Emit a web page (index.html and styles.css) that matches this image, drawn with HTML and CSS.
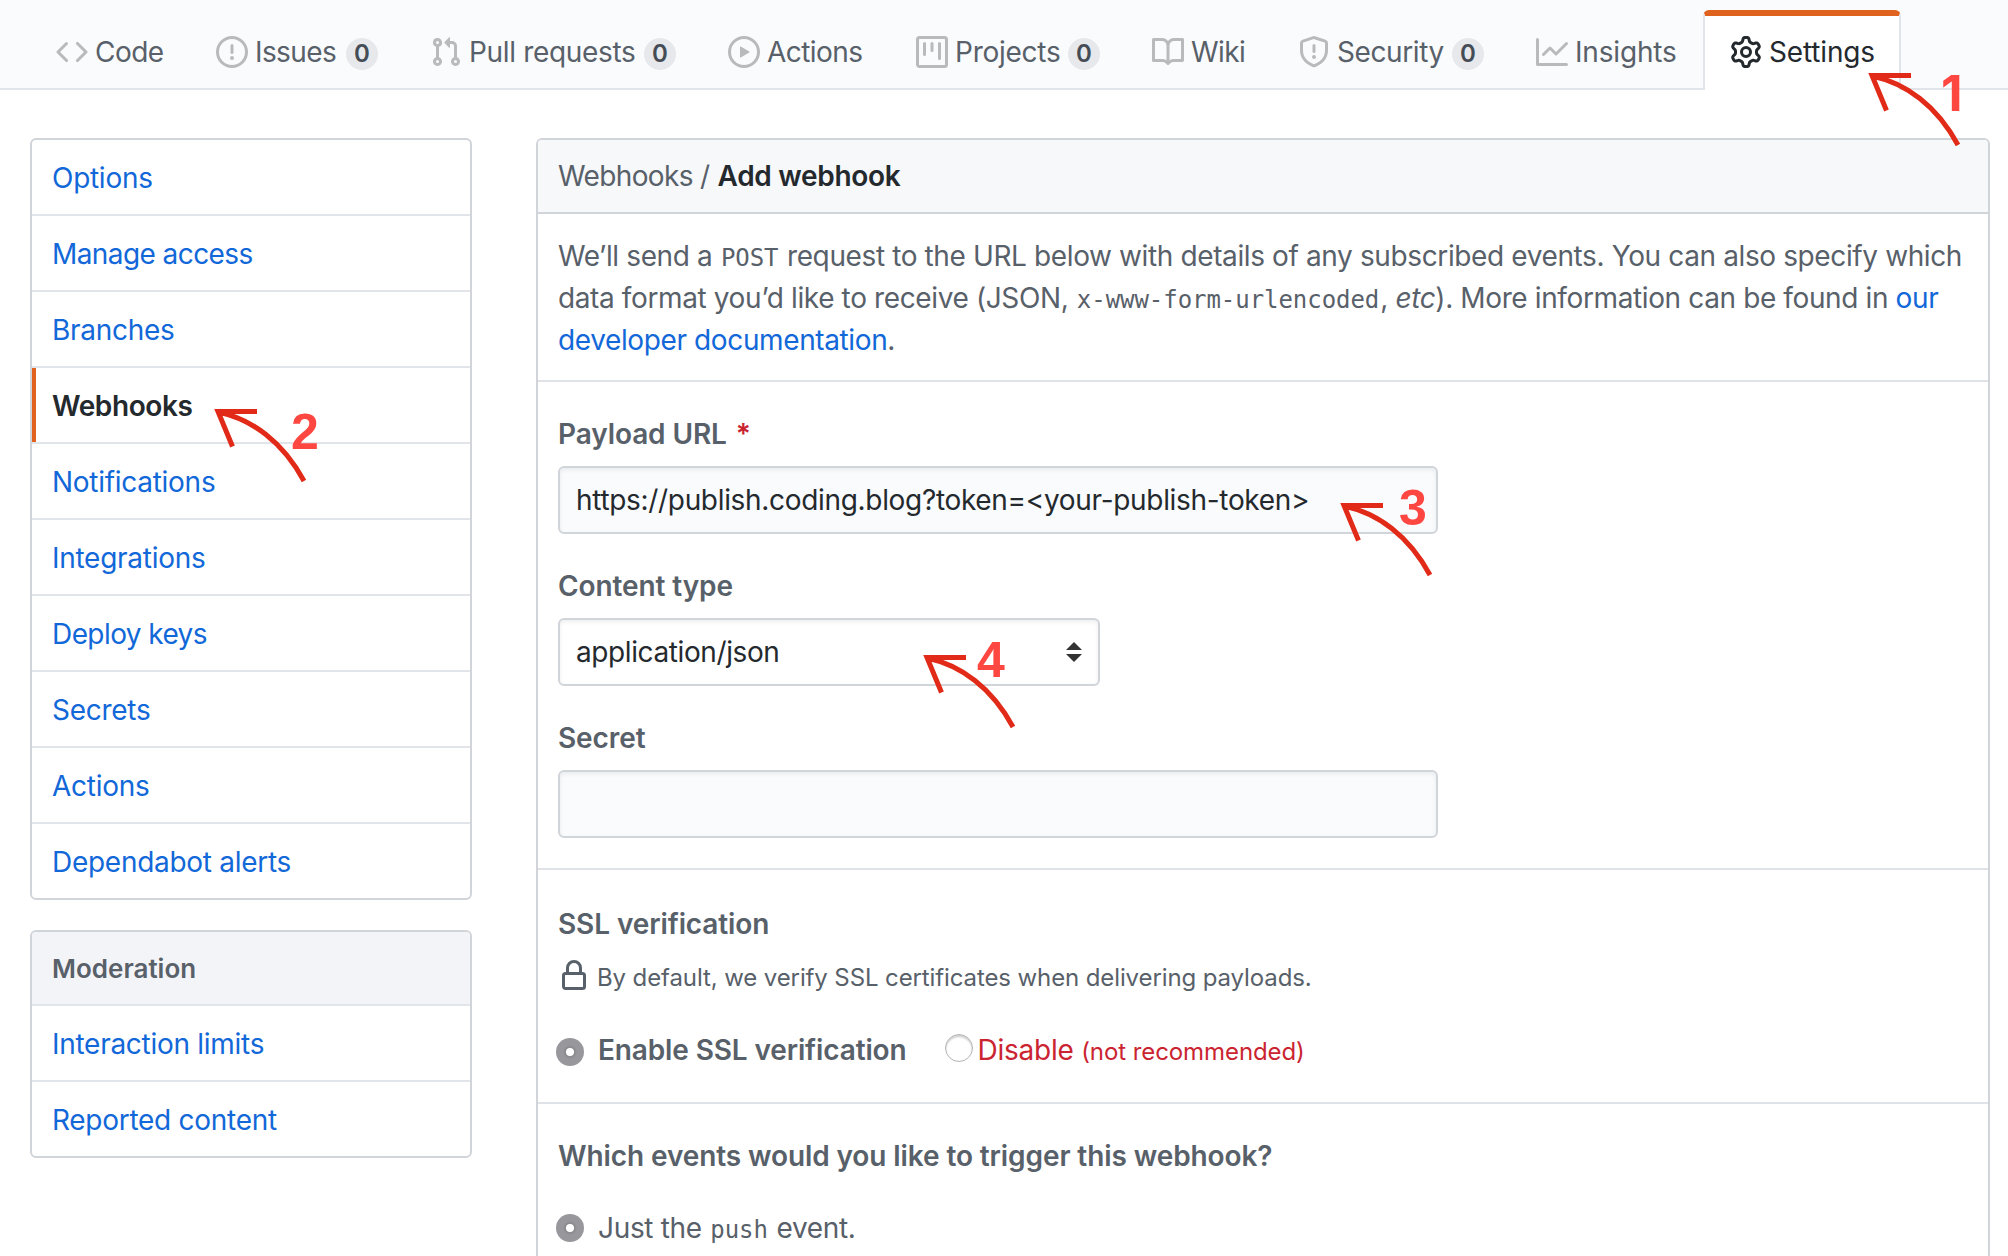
FILE: index.html
```html
<!DOCTYPE html>
<html lang="en">
<head>
<meta charset="utf-8">
<title>Add webhook</title>
<link rel="stylesheet" href="styles.css">
</head>
<body>
<nav class="tabs">
  <a class="tab tab-code"><svg class="icon" viewBox="0 0 16 16"><path d="M4.72 3.22a.75.75 0 011.06 1.06L2.06 8l3.72 3.72a.75.75 0 11-1.06 1.06L.47 8.53a.75.75 0 010-1.06l4.25-4.25zm6.56 0a.75.75 0 10-1.06 1.06L13.94 8l-3.72 3.72a.75.75 0 101.06 1.06l4.25-4.25a.75.75 0 000-1.06l-4.25-4.25z"/></svg><span>Code</span></a>
  <a class="tab tab-issues"><svg class="icon" viewBox="0 0 16 16"><path fill-rule="evenodd" d="M8 1.5a6.5 6.5 0 100 13 6.5 6.5 0 000-13zM0 8a8 8 0 1116 0A8 8 0 010 8zm9 3a1 1 0 11-2 0 1 1 0 012 0zm-.25-6.25a.75.75 0 00-1.5 0v3.5a.75.75 0 001.5 0v-3.5z"/></svg><span>Issues</span><span class="counter">0</span></a>
  <a class="tab tab-pulls"><svg class="icon" viewBox="0 0 16 16"><path fill-rule="evenodd" d="M7.177 3.073L9.573.677A.25.25 0 0110 .854v4.792a.25.25 0 01-.427.177L7.177 3.427a.25.25 0 010-.354zM3.75 2.5a.75.75 0 100 1.5.75.75 0 000-1.5zm-2.25.75a2.25 2.25 0 113 2.122v5.256a2.251 2.251 0 11-1.5 0V5.372A2.25 2.25 0 011.5 3.25zM11 2.5h-1V4h1a1 1 0 011 1v5.628a2.251 2.251 0 101.5 0V5A2.5 2.5 0 0011 2.5zm1 10.25a.75.75 0 111.5 0 .75.75 0 01-1.5 0zM3.75 12a.75.75 0 100 1.5.75.75 0 000-1.5z"/></svg><span>Pull requests</span><span class="counter">0</span></a>
  <a class="tab tab-actions"><svg class="icon" viewBox="0 0 16 16"><path fill-rule="evenodd" d="M1.5 8a6.5 6.5 0 1113 0 6.5 6.5 0 01-13 0zM8 0a8 8 0 100 16A8 8 0 008 0zM6.379 5.227A.25.25 0 006 5.442v5.117a.25.25 0 00.379.214l4.264-2.559a.25.25 0 000-.428L6.379 5.227z"/></svg><span>Actions</span></a>
  <a class="tab tab-projects"><svg class="icon" viewBox="0 0 16 16"><path fill-rule="evenodd" d="M1.75 0A1.75 1.75 0 000 1.75v12.5C0 15.216.784 16 1.75 16h12.5A1.75 1.75 0 0016 14.25V1.75A1.75 1.75 0 0014.25 0H1.75zM1.5 1.75a.25.25 0 01.25-.25h12.5a.25.25 0 01.25.25v12.5a.25.25 0 01-.25.25H1.75a.25.25 0 01-.25-.25V1.75zM11.75 3a.75.75 0 00-.75.75v7.5a.75.75 0 001.5 0v-7.5a.75.75 0 00-.75-.75zm-8.25.75a.75.75 0 011.5 0v5.5a.75.75 0 01-1.5 0v-5.5zM8 3a.75.75 0 00-.75.75v3.5a.75.75 0 001.5 0v-3.5A.75.75 0 008 3z"/></svg><span>Projects</span><span class="counter">0</span></a>
  <a class="tab tab-wiki"><svg class="icon" viewBox="0 0 16 16"><path fill-rule="evenodd" d="M0 1.75A.75.75 0 01.75 1h4.253c1.227 0 2.317.59 3 1.501A3.744 3.744 0 0111.006 1h4.245a.75.75 0 01.75.75v10.5a.75.75 0 01-.75.75h-4.507a2.25 2.25 0 00-1.591.659l-.622.621a.75.75 0 01-1.06 0l-.622-.621A2.25 2.25 0 005.258 13H.75a.75.75 0 01-.75-.75V1.75zm8.755 3a2.25 2.25 0 012.25-2.25H14.5v9h-3.757c-.71 0-1.4.201-1.992.572l.004-7.322zm-1.504 7.324l.004-5.073-.002-2.253A2.25 2.25 0 005.003 2.5H1.5v9h3.757a3.75 3.75 0 011.994.574z"/></svg><span>Wiki</span></a>
  <a class="tab tab-security"><svg class="icon" viewBox="0 0 16 16"><path fill-rule="evenodd" d="M7.467.133a1.75 1.75 0 011.066 0l5.25 1.68A1.75 1.75 0 0115 3.48V7c0 1.566-.32 3.182-1.303 4.682-.983 1.498-2.585 2.813-5.032 3.855a1.7 1.7 0 01-1.33 0c-2.447-1.042-4.049-2.357-5.032-3.855C1.32 10.182 1 8.566 1 7V3.48a1.75 1.75 0 011.217-1.667l5.25-1.68zm.61 1.429a.25.25 0 00-.153 0l-5.25 1.68a.25.25 0 00-.174.238V7c0 1.358.275 2.666 1.057 3.86.784 1.194 2.121 2.34 4.366 3.297a.2.2 0 00.154 0c2.245-.956 3.582-2.104 4.366-3.298C13.225 9.666 13.5 8.36 13.5 7V3.48a.25.25 0 00-.174-.237l-5.25-1.68zM9 10.5a1 1 0 11-2 0 1 1 0 012 0zm-.25-5.75a.75.75 0 10-1.5 0v3a.75.75 0 001.5 0v-3z"/></svg><span>Security</span><span class="counter">0</span></a>
  <a class="tab tab-insights"><svg class="icon" viewBox="0 0 16 16"><path d="M1.5 1.75a.75.75 0 00-1.5 0v12.5c0 .414.336.75.75.75h14.5a.75.75 0 000-1.5H1.5V1.75zm14.28 2.53a.75.75 0 00-1.06-1.06L10 7.94 7.53 5.47a.75.75 0 00-1.06 0L3.22 8.72a.75.75 0 001.06 1.06L7 7.06l2.47 2.47a.75.75 0 001.06 0l5.25-5.25z"/></svg><span>Insights</span></a>
  <a class="tab tab-settings selected"><svg class="icon" viewBox="0 0 16 16"><path fill-rule="evenodd" d="M7.429 1.525a6.593 6.593 0 011.142 0c.036.003.108.036.137.146l.289 1.105c.147.56.55.967.997 1.189.174.086.341.183.501.29.417.278.97.423 1.53.27l1.102-.303c.11-.03.175.016.195.046.219.31.41.641.573.989.014.031.022.11-.059.19l-.815.806c-.411.406-.562.957-.53 1.456a4.588 4.588 0 010 .582c-.032.499.119 1.05.53 1.456l.815.806c.08.08.073.159.059.19a6.494 6.494 0 01-.573.99c-.02.029-.086.074-.195.045l-1.103-.303c-.559-.153-1.112-.008-1.529.27-.16.107-.327.204-.5.29-.449.222-.851.628-.998 1.189l-.289 1.105c-.029.11-.101.143-.137.146a6.613 6.613 0 01-1.142 0c-.036-.003-.108-.037-.137-.146l-.289-1.105c-.147-.56-.55-.967-.997-1.189a4.502 4.502 0 01-.501-.29c-.417-.278-.97-.423-1.53-.27l-1.102.303c-.11.03-.175-.016-.195-.046a6.492 6.492 0 01-.573-.989c-.014-.031-.022-.11.059-.19l.815-.806c.411-.406.562-.957.53-1.456a4.587 4.587 0 010-.582c.032-.499-.119-1.05-.53-1.456l-.815-.806c-.08-.08-.073-.159-.059-.19a6.44 6.44 0 01.573-.99c.02-.029.086-.075.195-.045l1.103.303c.559.153 1.112.008 1.529-.27.16-.107.327-.204.5-.29.449-.222.851-.628.998-1.189l.289-1.105c.029-.11.101-.143.137-.146zM8 0c-.236 0-.47.01-.701.03-.743.065-1.29.615-1.458 1.261l-.29 1.106c-.017.066-.078.158-.211.224a5.994 5.994 0 00-.668.386c-.123.082-.233.09-.3.071L3.27 2.776c-.644-.177-1.392.02-1.82.63a7.977 7.977 0 00-.704 1.217c-.315.675-.111 1.422.363 1.891l.815.806c.05.048.098.147.088.294a6.084 6.084 0 000 .772c.01.147-.038.246-.088.294l-.815.806c-.474.469-.678 1.216-.363 1.891.2.428.436.835.704 1.218.428.609 1.176.806 1.82.63l1.103-.303c.066-.019.176-.011.299.071.213.143.436.272.668.386.133.066.194.158.212.224l.289 1.106c.169.646.715 1.196 1.458 1.26a8.094 8.094 0 001.402 0c.743-.064 1.29-.614 1.458-1.26l.29-1.106c.017-.066.078-.158.211-.224a5.98 5.98 0 00.668-.386c.123-.082.233-.09.3-.071l1.102.302c.644.177 1.392-.02 1.82-.63.268-.382.505-.789.704-1.217.315-.675.111-1.422-.364-1.891l-.814-.806c-.05-.048-.098-.147-.088-.294a6.1 6.1 0 000-.772c-.01-.147.039-.246.088-.294l.814-.806c.475-.469.679-1.216.364-1.891a7.992 7.992 0 00-.704-1.218c-.428-.609-1.176-.806-1.82-.63l-1.103.303c-.066.019-.176.011-.299-.071a5.991 5.991 0 00-.668-.386c-.133-.066-.194-.158-.212-.224L10.16 1.29C9.99.645 9.444.095 8.701.031A8.094 8.094 0 008 0zm1.5 8a1.5 1.5 0 11-3 0 1.5 1.5 0 013 0zM11 8a3 3 0 11-6 0 3 3 0 016 0z"/></svg><span>Settings</span></a>
</nav>

<main class="page">
  <aside class="sidebar">
    <div class="menu">
      <a class="menu-item">Options</a>
      <a class="menu-item tight">Manage access</a>
      <a class="menu-item">Branches</a>
      <a class="menu-item current">Webhooks</a>
      <a class="menu-item">Notifications</a>
      <a class="menu-item">Integrations</a>
      <a class="menu-item tight">Deploy keys</a>
      <a class="menu-item">Secrets</a>
      <a class="menu-item">Actions</a>
      <a class="menu-item">Dependabot alerts</a>
    </div>
    <div class="menu">
      <div class="menu-heading">Moderation</div>
      <a class="menu-item">Interaction limits</a>
      <a class="menu-item">Reported content</a>
    </div>
  </aside>

  <section class="panel">
    <header class="panel-head"><span class="crumb">Webhooks /</span><strong>Add webhook</strong></header>
    <div class="intro">We’ll send a <code>POST</code> request to the URL below with details of any subscribed events. You can also specify which<br>data format you’d like to receive (JSON, <code>x-www-form-urlencoded</code>, <em>etc</em>). More information can be found in <a>our<br>developer documentation</a>.</div>

    <div class="fields">
      <div class="field">
        <label class="label">Payload URL <span class="required">*</span></label>
        <div class="control wide">https://publish.coding.blog?token=&lt;your-publish-token&gt;</div>
      </div>
      <div class="field">
        <label class="label">Content type</label>
        <div class="control select"><span>application/json</span><svg class="sort" viewBox="0 0 16 20"><path d="M8 0l8 8H0zM0 12h16l-8 8z"/></svg></div>
      </div>
      <div class="field">
        <label class="label">Secret</label>
        <div class="control wide"></div>
      </div>
    </div>

    <div class="ssl">
      <div class="label">SSL verification</div>
      <div class="note"><svg class="icon" viewBox="0 0 16 16"><path fill-rule="evenodd" d="M4 4v2h-.25A1.75 1.75 0 002 7.75v5.5c0 .966.784 1.75 1.75 1.75h8.5A1.75 1.75 0 0014 13.25v-5.5A1.75 1.75 0 0012.25 6H12V4a4 4 0 10-8 0zm6.5 2V4a2.5 2.5 0 00-5 0v2h5zM3.75 7.5h8.5a.25.25 0 01.25.25v5.5a.25.25 0 01-.25.25h-8.5a.25.25 0 01-.25-.25v-5.5a.25.25 0 01.25-.25z"/></svg><span>By default, we verify SSL certificates when delivering payloads.</span></div>
      <div class="choices">
        <span class="radio on"></span><span class="choice strong">Enable SSL verification</span>
        <span class="radio off"></span><span class="choice danger">Disable <small>(not recommended)</small></span>
      </div>
    </div>

    <div class="events">
      <div class="label">Which events would you like to trigger this webhook?</div>
      <div class="choices"><span class="radio on"></span><span class="choice">Just the <code>push</code> event.</span></div>
    </div>
  </section>
</main>

<div class="mark mark-1"><svg class="arrow" viewBox="0 0 96 78"><path d="M44 4.500H5l14.500 35M5 5C39 12 70 35 91 74"/></svg><b>1</b></div>
<div class="mark mark-2"><svg class="arrow" viewBox="0 0 96 78"><path d="M44 4.500H5l14.500 35M5 5C39 12 70 35 91 74"/></svg><b>2</b></div>
<div class="mark mark-3"><svg class="arrow" viewBox="0 0 96 78"><path d="M44 4.500H5l14.500 35M5 5C39 12 70 35 91 74"/></svg><b>3</b></div>
<div class="mark mark-4"><svg class="arrow" viewBox="0 0 96 78"><path d="M44 4.500H5l14.500 35M5 5C39 12 70 35 91 74"/></svg><b>4</b></div>
</body>
</html>
```
FILE: styles.css
```css
* { box-sizing: border-box; }
body {
  margin: 0;
  height: 1256px;
  overflow: hidden;
  position: relative;
  background: #fff;
  color: #586069;
  font: 400 28px/42px Inter, "Liberation Sans", sans-serif;
  letter-spacing: -0.33px;
  white-space: nowrap;
}
a { color: #1268d8; }
code { margin: 0 1px; font: 24px "DejaVu Sans Mono", monospace; letter-spacing: -0.05px; }
.icon { width: 32px; height: 32px; flex: none; fill: currentColor; }

/* repository tabs */
.tabs {
  display: flex;
  height: 90px;
  padding: 10px 0 0 30px;
  background: #fafbfd;
  box-shadow: inset 0 -2px #e1e4e8;
}
.tab {
  display: flex;
  align-items: center;
  gap: 7px;
  flex: none;
  height: 80px;
  padding: 2px 24px 0;
  border: solid transparent;
  border-width: 2px 2px 0;
  color: #586069;
}
.tab .icon { color: #b9babc; }
.tab-code { width: 160px; letter-spacing: -0.55px; }
.tab-issues { width: 214px; letter-spacing: -0.6px; }
.tab-pulls { width: 298px; }
.tab-actions { width: 188px; letter-spacing: -0.55px; }
.tab-projects { width: 236px; letter-spacing: -0.25px; }
.tab-wiki { width: 146px; letter-spacing: -0.55px; }
.tab-security { width: 238px; letter-spacing: -0.4px; }
.tab-insights { width: 193px; letter-spacing: -0.18px; }
.tab-settings { width: 198px; letter-spacing: -0.16px; }
.tab.selected {
  padding: 0 25px 2px;
  border: 2px solid #e1e4e8;
  border-top: 6px solid #df621f;
  border-bottom: 0;
  border-radius: 6px 6px 0 0;
  background: #fff;
  color: #24292e;
}
.tab.selected .icon { color: #24292e; }
.counter {
  width: 32px;
  height: 32px;
  margin: 4px 0 0 auto;
  border-radius: 16px;
  background: #e7e8eb;
  color: #444d56;
  font-size: 24px;
  font-weight: 600;
  line-height: 32px;
  letter-spacing: 0;
  text-align: center;
}

/* columns */
.page { display: flex; align-items: flex-start; gap: 64px; padding: 48px 18px 0 30px; }
.sidebar { display: flex; flex-direction: column; gap: 30px; width: 442px; flex: none; }
.menu { border: 2px solid #d1d5da; border-radius: 6px; overflow: hidden; }
.menu-item {
  display: block;
  height: 74px;
  padding: 0 20px;
  line-height: 76px;
  letter-spacing: -0.28px;
}
.menu-item + .menu-item { height: 76px; border-top: 2px solid #e1e4e8; }
.menu-item.tight { letter-spacing: -0.58px; }
.menu-item.current {
  box-shadow: inset 4px 0 #e1621f;
  color: #24292e;
  font-weight: 600;
  letter-spacing: -0.42px;
}
.menu-heading {
  height: 74px;
  padding: 0 20px;
  border-bottom: 2px solid #e1e4e8;
  background: #f3f4f8;
  font-size: 26px;
  font-weight: 600;
  line-height: 74px;
  letter-spacing: 0;
}

/* webhook form */
.panel {
  flex: 1;
  height: 1140px;
  border: 2px solid #d1d5da;
  border-radius: 6px;
}
.panel-head {
  display: flex;
  gap: 8px;
  height: 74px;
  padding: 0 20px;
  border-bottom: 2px solid #d1d5da;
  border-radius: 4px 4px 0 0;
  background: #f6f8fa;
  line-height: 73px;
}
.crumb { letter-spacing: -0.64px; }
.panel-head strong { color: #24292e; font-weight: 600; letter-spacing: -0.3px; }
.intro { height: 168px; padding: 21px 20px 0; border-bottom: 2px solid #dfe3e7; letter-spacing: -0.38px; }
.fields { display: flex; flex-direction: column; gap: 29px; padding: 31px 20px 30px; border-bottom: 2px solid #dfe3e7; }
.field { display: flex; flex-direction: column; gap: 11px; align-items: flex-start; }
.field + .field { padding-top: 2px; }
.label { font-weight: 600; letter-spacing: -0.1px; line-height: 42px; }
.required { margin-left: 2px; color: #cb2431; }
.control {
  height: 68px;
  padding: 0 16px;
  border: 2px solid #d1d5da;
  border-radius: 6px;
  background: #fafbfd;
  box-shadow: inset 0 2px 4px rgba(27, 31, 35, 0.075);
  color: #24292e;
  line-height: 64px;
  letter-spacing: -0.32px;
}
.wide { width: 880px; }
.select { display: flex; align-items: center; justify-content: space-between; width: 542px; background: #fff; letter-spacing: -0.4px; }
.sort { width: 16px; height: 20px; fill: #333; }
.ssl { height: 234px; padding: 33px 20px 0; border-bottom: 2px solid #dfe3e7; }
.note { display: flex; gap: 7px; height: 32px; margin-top: 15px; font-size: 24px; line-height: 36px; letter-spacing: -0.11px; }
.choices { display: flex; align-items: center; height: 42px; }
.choice { padding-top: 2px; }
.ssl .choices { margin-top: 36px; }
.radio { width: 28px; height: 28px; flex: none; border-radius: 50%; }
.radio.on {
  margin: 5px 14px 0 -2px;
  background: radial-gradient(circle, #fff 3.600px, #88878c 4.600px, #98979c 7px);
}
.radio.off {
  margin: -2px 5px 0 38px;
  border: 1px solid #b4b4b4;
  background: #fff;
  box-shadow: inset 0 2px 2px rgba(0, 0, 0, 0.2);
}
.strong { font-weight: 600; letter-spacing: -0.13px; }
.danger { padding-top: 4px; color: #cb2431; letter-spacing: -0.25px; }
.danger small { font-size: 24px; letter-spacing: -0.08px; }
.events { padding: 31px 20px 0; }
.events .choices { margin-top: 29px; }
.events .radio { margin-top: 2px; }

/* numbered pointers drawn over the page */
.mark { position: absolute; display: flex; color: #ff4742; }
.mark b { font: 700 50px/52px "Liberation Sans", Arial, sans-serif; letter-spacing: 0; }
.arrow { width: 96px; height: 78px; fill: none; stroke: #e12a18; stroke-width: 5px; }
.mark-1 { left: 1867px; top: 71px; }
.mark-2 { left: 213px; top: 407px; }
.mark-3 { left: 1339px; top: 501px; }
.mark-4 { left: 922px; top: 653px; }
.mark-1 b { margin: -4px 0 0 -22px; font-family: Inter, sans-serif; }
.mark-2 b { margin: -1px 0 0 -18px; }
.mark-3 b { margin: -19px 0 0 -36px; }
.mark-4 b { margin: -19px 0 0 -41px; }
```
